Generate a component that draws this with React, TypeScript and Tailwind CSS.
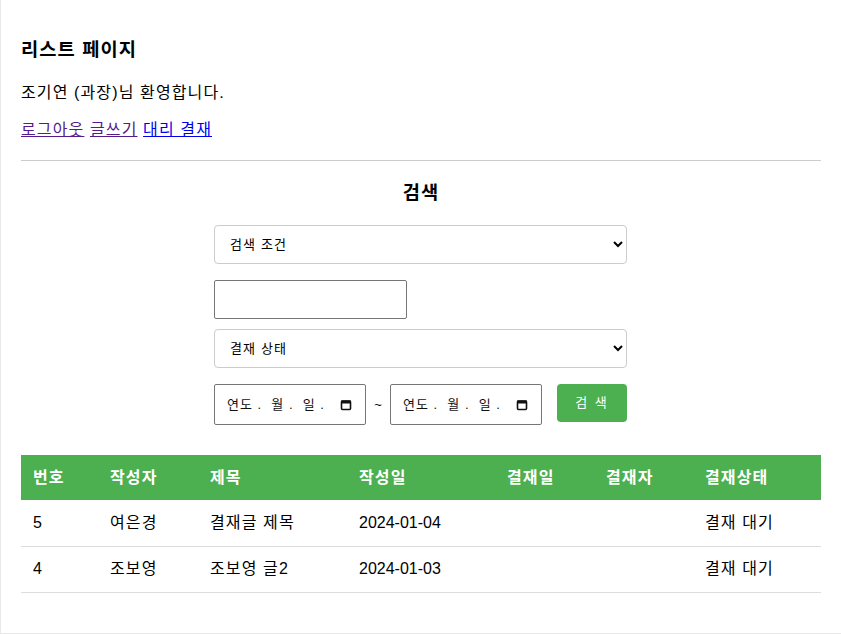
import React from 'react';

const rows = [
  { id: 5, writer: '여은경', title: '결재글 제목', date: '2024-01-04', status: '결재 대기' },
  { id: 4, writer: '조보영', title: '조보영 글2', date: '2024-01-03', status: '결재 대기' },
];

function CalendarIcon() {
  return (
    <svg width="12" height="12" viewBox="0 0 12 12" className="shrink-0">
      <rect x="1.5" y="2" width="9" height="8.5" rx="1" fill="none" stroke="#111" strokeWidth="1.6" />
      <rect x="1" y="1.5" width="10" height="3" fill="#111" />
    </svg>
  );
}

function FakeDate() {
  return (
    <div className="w-[152px] h-[41px] border border-[#767676] rounded-[2px] flex items-center pl-[12px] pr-[13px] text-[13px] text-[#111]">
      <span className="flex-1 tracking-[1px] whitespace-pre">연도 .  월 .  일 .</span>
      <CalendarIcon />
    </div>
  );
}

export default function App() {
  return (
    <div
      className="min-h-[634px] border-l border-b border-[#e8e8e8] pl-[20px] pr-[20px] pt-[20px] text-[16px] text-black leading-[22px] tracking-[0.07em]"
      style={{ fontFamily: '"Liberation Sans", "Noto Sans CJK KR", sans-serif' }}
    >
      <h3 className="mt-[19px] text-[18.7px] font-bold">리스트 페이지</h3>
      <p className="mt-[21px]">조기연 (과장)님 환영합니다.</p>
      <p className="mt-[15px]">
        <a href="#" className="underline text-[#551A8B]">로그아웃</a>{' '}
        <a href="#" className="underline text-[#551A8B]">글쓰기</a>{' '}
        <a href="#" className="underline text-[#0000EE]">대리 결재</a>
      </p>
      <hr className="mt-[19px] border-0 border-t border-[#cccccc]" />

      <h3 className="mt-[21px] text-center text-[18.7px] font-bold">검색</h3>

      <div className="ml-[193px] mt-[21px] w-[413px] flex flex-col">
        <select className="h-[39px] w-full border border-[#cccccc] rounded-[4px] px-[11px] text-[13px] bg-white">
          <option>검색 조건</option>
        </select>
        <input type="text" className="mt-[16px] h-[39px] w-[193px] border border-[#767676] rounded-[2px] px-2" />
        <select className="mt-[10px] h-[39px] w-full border border-[#cccccc] rounded-[4px] px-[11px] text-[13px] bg-white">
          <option>결재 상태</option>
        </select>
        <div className="mt-[16px] flex items-start">
          <FakeDate />
          <span className="w-[24px] h-[41px] flex items-center justify-center text-[13px] tracking-normal">~</span>
          <FakeDate />
          <button className="ml-[15px] w-[70px] h-[38px] bg-[#4CAF50] text-white text-[13px] rounded-[4px] tracking-[2px]">
            검 색
          </button>
        </div>
      </div>

      <table className="mt-[30px] w-[800px] border-collapse text-left">
        <thead>
          <tr className="bg-[#4CAF50] text-white h-[45px]">
            <th className="w-[77px] px-[12px] font-bold">번호</th>
            <th className="w-[100px] px-[12px] font-bold">작성자</th>
            <th className="w-[149px] px-[12px] font-bold">제목</th>
            <th className="w-[148px] px-[12px] font-bold">작성일</th>
            <th className="w-[99px] px-[12px] font-bold">결재일</th>
            <th className="w-[99px] px-[12px] font-bold">결재자</th>
            <th className="px-[12px] font-bold">결재상태</th>
          </tr>
        </thead>
        <tbody>
          {rows.map(r => (
            <tr key={r.id} className="h-[46px] border-b border-[#dddddd]">
              <td className="px-[12px] tracking-normal">{r.id}</td>
              <td className="px-[12px]">{r.writer}</td>
              <td className="px-[12px]">{r.title}</td>
              <td className="px-[12px] tracking-normal">{r.date}</td>
              <td className="px-[12px]"></td>
              <td className="px-[12px]"></td>
              <td className="px-[12px]">{r.status}</td>
            </tr>
          ))}
        </tbody>
      </table>
    </div>
  );
}
